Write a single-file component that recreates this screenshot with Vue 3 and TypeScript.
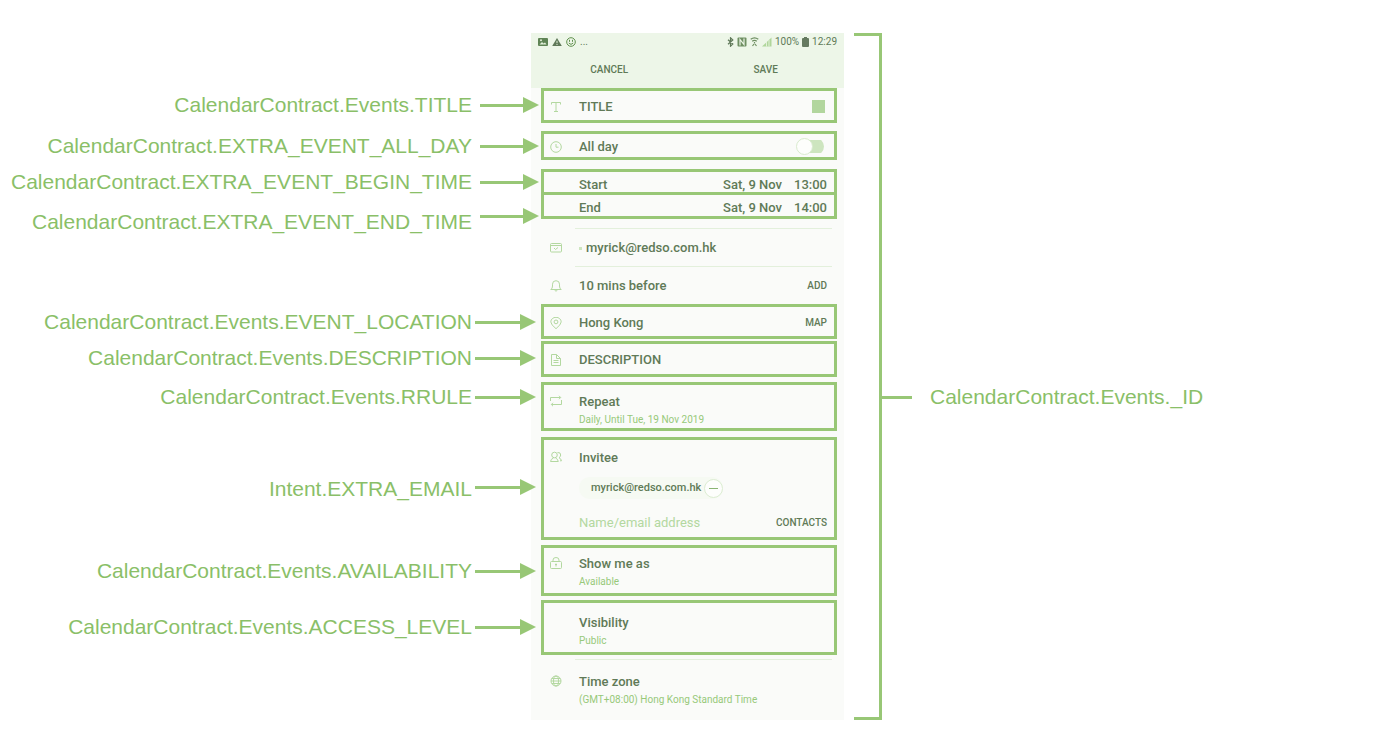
<script setup lang="ts">
import { ref } from 'vue'

interface Callout {
  label: string
  place: string
  near?: boolean
}

const callouts: Callout[] = [
  { label: 'CalendarContract.Events.TITLE', place: 'at-title' },
  { label: 'CalendarContract.EXTRA_EVENT_ALL_DAY', place: 'at-all-day' },
  { label: 'CalendarContract.EXTRA_EVENT_BEGIN_TIME', place: 'at-begin' },
  { label: 'CalendarContract.EXTRA_EVENT_END_TIME', place: 'at-end' },
  { label: 'CalendarContract.Events.EVENT_LOCATION', place: 'at-location', near: true },
  { label: 'CalendarContract.Events.DESCRIPTION', place: 'at-description', near: true },
  { label: 'CalendarContract.Events.RRULE', place: 'at-repeat', near: true },
  { label: 'Intent.EXTRA_EMAIL', place: 'at-invitee', near: true },
  { label: 'CalendarContract.Events.AVAILABILITY', place: 'at-availability', near: true },
  { label: 'CalendarContract.Events.ACCESS_LEVEL', place: 'at-access', near: true },
]

const title = ref('TITLE')
const location = ref('Hong Kong')
const description = ref('DESCRIPTION')
const invitee = ref('')
const allDay = ref(false)
</script>

<template>
  <main class="diagram">
    <ul class="callouts">
      <li v-for="c in callouts" :key="c.label" class="callout" :class="[c.place, { near: c.near }]">
        <span>{{ c.label }}</span>
        <span class="arrow" aria-hidden="true"><i class="shaft"></i><i class="head"></i></span>
      </li>
    </ul>

    <form class="phone" @submit.prevent>
      <header class="top">
        <div class="status">
          <svg width="10" height="10" viewBox="0 0 10 10"><rect x="0" y="1" width="10" height="8" rx="1" fill="#5f8455" /><path d="M1.500 7.500 4 5l1.500 1.500L7 5.500 8.500 7.500z" fill="#e2f0da" /><circle cx="3" cy="3.200" r="1" fill="#e2f0da" /></svg>
          <svg width="10" height="10" viewBox="0 0 10 10"><path d="M5 1 9.800 9H.2z" fill="#5f7858" /><path d="M5 3.800v2.400M5 7v1" stroke="#e2f0da" /></svg>
          <svg width="10" height="10" viewBox="0 0 10 10" fill="none" stroke="#5f8f4c"><circle cx="5" cy="5" r="4.300" /><path d="M3.500 2.800v2M6.500 2.800v2M2.800 6q2.200 2.800 4.400 0" /></svg>
          <span class="dots">...</span>
          <span class="status-right">
            <svg width="7" height="10" viewBox="0 0 7 10" fill="none" stroke="#5f7858" stroke-width="1.200"><path d="M1 2.800 5.800 7 3.500 9.200V.8L5.800 3 1 7.200" /></svg>
            <svg width="10" height="10" viewBox="0 0 10 10"><path d="M1.500.5h7q1 0 1 1v7q0 1-1 1h-7q-1 0-1-1v-7q0-1 1-1z" fill="#6f8f62" /><path d="M3 8.500V2.500L7 7.500V1.500" fill="none" stroke="#edf6e8" stroke-width="1.200" /></svg>
            <svg width="9" height="10" viewBox="0 0 9 10" fill="none" stroke="#6f8f62" stroke-width="1.200"><path d="M.7 2.300q3.800-3 7.600 0M2.200 4.300q2.300-1.800 4.600 0M4.500 5v1.500M2.500 9l1.500-2M6.500 9 5 7" /></svg>
            <svg width="10" height="10" viewBox="0 0 10 10"><path d="M0 9.500 9.500.5v9z" fill="#b0d69b" /><path d="M4.500 9.500V5M7 9.500V3" stroke="#e2f0da" /></svg>
            <span class="percent">100%</span>
            <svg width="7" height="10" viewBox="0 0 7 10"><path d="M2 0h3v1h1q1 0 1 1v7q0 1-1 1H1q-1 0-1-1V2q0-1 1-1h1z" fill="#657a5f" /></svg>
            <span>12:29</span>
          </span>
        </div>
        <div class="actions">
          <button type="button">CANCEL</button>
          <button type="submit">SAVE</button>
        </div>
      </header>

      <div class="field boxed title-field">
        <svg class="icon" viewBox="0 0 12 12"><path d="M1.500 3.500v-2h9v2M6 1.500v9M4 10.500h4" /></svg>
        <input v-model="title" class="main" aria-label="Title" />
        <button type="button" class="swatch" aria-label="Event colour"></button>
      </div>

      <div class="field boxed all-day-field">
        <svg class="icon" viewBox="0 0 12 12"><circle cx="6" cy="6" r="5.300" /><path d="M6 3v3.200h2.500" /></svg>
        <label class="main" for="all-day">All day</label>
        <input id="all-day" v-model="allDay" type="checkbox" class="switch" role="switch" />
      </div>

      <div class="field boxed start-field">
        <span class="main">Start</span>
        <button type="button" class="when">Sat, 9 Nov</button>
        <button type="button" class="when">13:00</button>
      </div>
      <div class="field boxed end-field">
        <span class="main">End</span>
        <button type="button" class="when">Sat, 9 Nov</button>
        <button type="button" class="when">14:00</button>
      </div>

      <div class="field ruled account-field">
        <svg class="icon" viewBox="0 0 12 12"><rect x=".5" y="1.500" width="11" height="8.500" rx="1" /><path d="M.5 3.500h11M4 6l1.500 1.500L8 5.500" /></svg>
        <span class="main account"><i class="dot"></i>myrick@redso.com.hk</span>
      </div>

      <div class="field ruled">
        <svg class="icon" viewBox="0 0 12 12"><path d="M.8 9.500h10.400Q9.500 8.500 9.500 6V4.200a3.500 3.500 0 0 0-7 0V6Q2.500 8.500 .8 9.500zM4.500 10q1.500 2.500 3 0" /></svg>
        <span class="main">10 mins before</span>
        <button type="button" class="action">ADD</button>
      </div>

      <div class="field boxed location-field">
        <svg class="icon" viewBox="0 0 12 12"><path d="M6 11.700Q.8 7.500.8 4.900a5.200 4.600 0 0 1 10.400 0Q11.200 7.500 6 11.700z" /><circle cx="6" cy="4.900" r="1.900" /></svg>
        <input v-model="location" class="main" aria-label="Location" />
        <button type="button" class="action">MAP</button>
      </div>

      <div class="field boxed description-field">
        <svg class="icon" viewBox="0 0 12 12"><path d="M1.500.5h5l4 4v7h-9zM6.500.5v4h4M3.500 6.500h5M3.500 8.500h5" /></svg>
        <input v-model="description" class="main" aria-label="Description" />
      </div>

      <div class="field boxed stacked repeat-field">
        <svg class="icon" viewBox="0 0 12 12"><path d="M.5 6V2.500h10M9 .8l1.700 1.700L9 4.200M11.500 5v4.500h-10M3 7.800 1.300 9.500 3 11.200" /></svg>
        <div class="main">Repeat<small>Daily, Until Tue, 19 Nov 2019</small></div>
      </div>

      <div class="field boxed stacked invitee-field">
        <svg class="icon" viewBox="0 0 12 12"><circle cx="4.500" cy="4" r="2.800" /><path d="M.5 10.500Q.7 8 3.500 7M5.500 7Q8 8 8.300 10.500H.5M7.500 1.500q3.300-.3 3.200 2.500Q10.500 6 9 6.800q2 .7 2.500 3H10" /></svg>
        <div class="main">
          <label for="invitee">Invitee</label>
          <div class="chip">
            <span>myrick@redso.com.hk</span>
            <button type="button" class="remove" aria-label="Remove invitee"></button>
          </div>
          <div class="entry">
            <input id="invitee" v-model="invitee" placeholder="Name/email address" />
            <button type="button" class="action">CONTACTS</button>
          </div>
        </div>
      </div>

      <div class="field boxed stacked show-field">
        <svg class="icon" viewBox="0 0 12 12"><rect x=".5" y="4.500" width="11" height="7" rx="1" /><path d="M3 4.500V3a3 2.500 0 0 1 6 0v1.500M6 6.500v3M5 7.500h2" /></svg>
        <div class="main">Show me as<small>Available</small></div>
      </div>

      <div class="field boxed stacked visibility-field">
        <div class="main">Visibility<small>Public</small></div>
      </div>

      <div class="field ruled stacked zone-field">
        <svg class="icon" viewBox="0 0 12 12"><circle cx="6" cy="6" r="5" /><ellipse cx="6" cy="6" rx="2.500" ry="5" /><path d="M1 6h10M2 3.500h8M2 8.500h8" /></svg>
        <div class="main">Time zone<small>(GMT+08:00) Hong Kong Standard Time</small></div>
      </div>
    </form>

    <aside class="whole">
      <div class="bracket"></div>
      <p class="id-callout"><i class="tick"></i>CalendarContract.Events._ID</p>
    </aside>
  </main>
</template>

<style>
body {
  margin: 0;
  background: #fff;
}
</style>

<style scoped>
.diagram {
  --line: #98c776;
  --ink: #607a57;
  --soft: #97c97a;
  display: grid;
  grid-template-columns: 531fr 313px 556fr;
  padding: 33px 0 27px;
  color: #8abf68;
  font: 21px/22px "Liberation Sans", Arial, sans-serif;
}
.callouts {
  position: relative;
  z-index: 1;
  list-style: none;
  margin: 0 -8px 0 0;
  padding: 61px 0 0;
}
.callout {
  display: flex;
  justify-content: flex-end;
  align-items: center;
  gap: 8px;
  height: 22px;
  white-space: nowrap;
}
.callout.near {
  gap: 3px;
  margin-right: 3px;
}
.at-all-day { margin-top: 19px; }
.at-begin { margin-top: 14px; }
.at-end { margin-top: 18px; }
.at-end .arrow { margin-bottom: 12px; }
.at-location { margin-top: 78px; }
.at-description { margin-top: 14px; }
.at-repeat { margin-top: 17px; }
.at-invitee { margin-top: 70px; }
.at-invitee .arrow { margin-bottom: 4px; }
.at-availability { margin-top: 60px; }
.at-access { margin-top: 34px; }
.arrow {
  display: flex;
  align-items: center;
  width: 59px;
}
.near .arrow { width: 61px; }
.shaft {
  flex: 1;
  height: 3px;
  background: var(--line);
}
.head {
  border: solid transparent;
  border-width: 8px 0 8px 16px;
  border-left-color: var(--line);
}

.phone {
  background: #fafbf9;
  color: var(--ink);
  font: 500 13px/18px Roboto, "Liberation Sans", sans-serif;
  padding-bottom: 11px;
}
.phone button,
.phone input {
  font: inherit;
  color: inherit;
  background: none;
  border: 0;
  padding: 0;
  margin: 0;
  outline: none;
}
.top {
  background: #edf6e8;
  height: 55px;
}
.status {
  display: flex;
  align-items: center;
  gap: 4px;
  height: 17px;
  padding: 0 7px;
  font-size: 10px;
  font-weight: 400;
}
.status-right {
  display: flex;
  align-items: center;
  gap: 3px;
  margin-left: auto;
}
.actions {
  display: grid;
  grid-template-columns: 1fr 1fr;
  box-sizing: border-box;
  height: 38px;
  padding-top: 2px;
}
.phone .actions button { font-size: 10px; }

.field {
  display: flex;
  align-items: center;
  box-sizing: border-box;
  margin: 0 7px 0 10px;
  padding: 2px 7px 0 35px;
}
.boxed {
  border: 3px solid var(--line);
}
.ruled {
  position: relative;
  padding: 2px 10px 0 38px;
  height: 38px;
}
.ruled::before {
  content: "";
  position: absolute;
  top: 0;
  left: 34px;
  right: 5px;
  border-top: 1px solid #e3f0dc;
}
.icon {
  flex: none;
  width: 12px;
  height: 12px;
  margin: 0 17px 0 -29px;
  fill: none;
  stroke: #b3d8a0;
}
.main {
  flex: 1;
  min-width: 0;
}
.stacked { align-items: flex-start; }
.stacked .icon { margin-top: 2px; }
small {
  display: block;
  font-size: 10px;
  font-weight: 400;
  color: var(--soft);
}
.title-field { height: 35px; }
.phone .swatch {
  width: 13px;
  height: 13px;
  margin-right: 2px;
  background: #b2d69e;
}
.all-day-field {
  margin-top: 8px;
  height: 29px;
}
.phone .switch {
  appearance: none;
  display: flex;
  align-items: center;
  width: 28px;
  height: 17px;
  margin-right: 3px;
  border-radius: 9px;
  background: linear-gradient(#cde5bf, #cde5bf) right center / 20px 13px no-repeat;
}
.switch::before {
  content: "";
  box-sizing: border-box;
  width: 17px;
  height: 17px;
  border: 1px solid #d9ebce;
  border-radius: 50%;
  background: #fdfefc;
}
.switch:checked { justify-content: flex-end; }
.start-field {
  margin-top: 9px;
  padding-top: 6px;
  height: 23px;
  border-bottom: 0;
}
.end-field {
  padding-top: 5px;
  height: 27px;
}
.when + .when { margin-left: 12px !important; }
.account-field { margin-top: 9px; }
.account {
  display: flex;
  align-items: center;
  gap: 4px;
}
.dot {
  width: 3px;
  height: 3px;
  background: #cde5bf;
}
.phone .action { font-size: 10px; }
.location-field { height: 35px; }
.description-field {
  margin-top: 2px;
  height: 36px;
}
.repeat-field {
  margin-top: 5px;
  padding-top: 8px;
  height: 49px;
}
.invitee-field {
  margin-top: 6px;
  padding-top: 9px;
  height: 103px;
}
.chip {
  display: flex;
  align-items: center;
  gap: 3px;
  width: max-content;
  height: 22px;
  margin-top: 10px;
  padding-left: 12px;
  border-radius: 11px;
  background: #f6faf3;
  font-size: 11px;
}
.phone .remove {
  display: grid;
  place-items: center;
  width: 19px;
  height: 19px;
  border: 1px solid #dcedd2;
  border-radius: 50%;
  background: #fdfefc;
}
.remove::before {
  content: "";
  width: 9px;
  height: 1px;
  background: #8ab573;
}
.entry {
  display: flex;
  align-items: center;
  margin-top: 15px;
}
.entry input {
  flex: 1;
  min-width: 0;
  font-weight: 400;
}
.entry input::placeholder {
  color: #b3d8a0;
  font-weight: 400;
  opacity: 1;
}
.show-field {
  margin-top: 5px;
  padding-top: 7px;
  height: 51px;
}
.visibility-field {
  margin-top: 4px;
  padding-top: 11px;
  height: 55px;
}
.zone-field {
  margin-top: 4px;
  padding-top: 14px;
  height: 50px;
}

.whole {
  display: flex;
  align-items: stretch;
}
.bracket {
  box-sizing: border-box;
  width: 28px;
  margin-left: 10px;
  border: 3px solid var(--line);
  border-left: 0;
}
.id-callout {
  display: flex;
  align-items: center;
  gap: 18px;
  height: 22px;
  margin: 353px 0 0;
  white-space: nowrap;
}
.tick {
  width: 30px;
  height: 3px;
  background: var(--line);
}
</style>
